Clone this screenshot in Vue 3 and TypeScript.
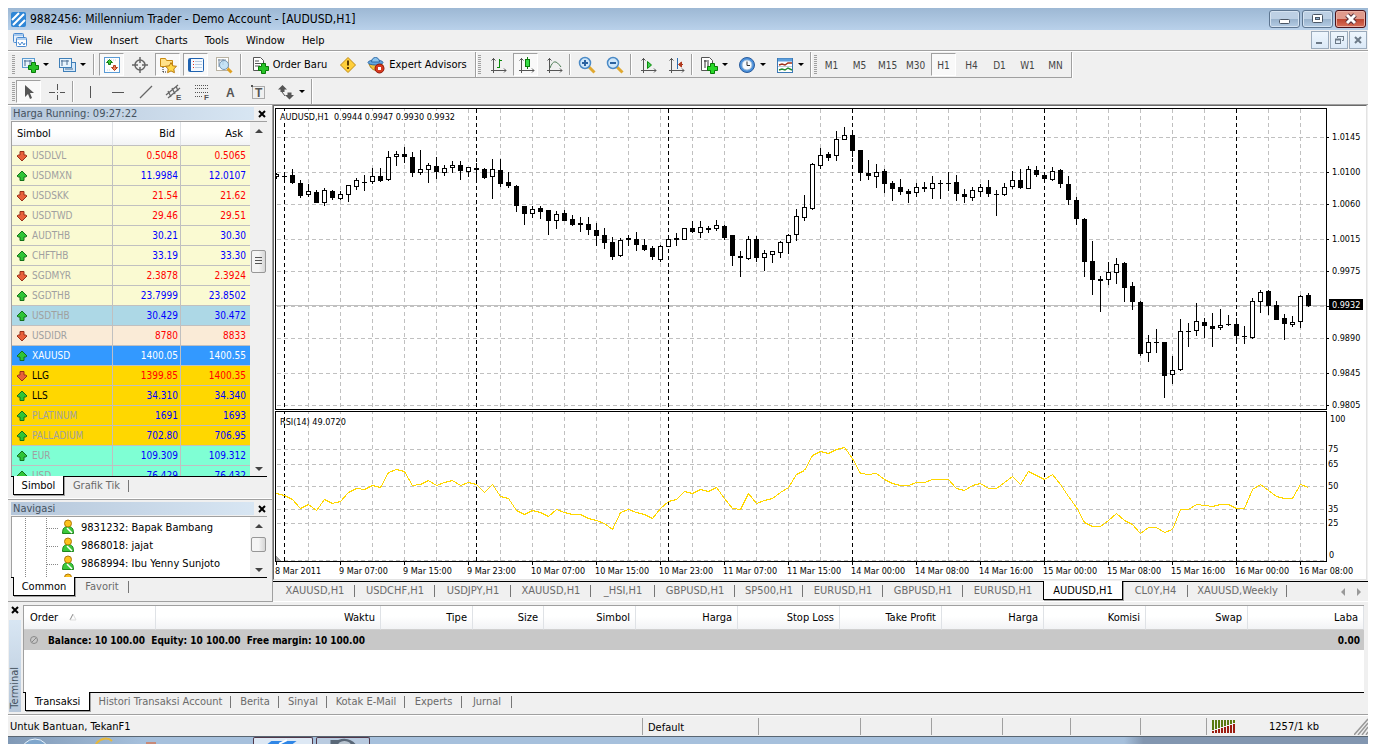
<script setup lang="ts">
interface Quote { sym: string; bid: string; ask: string; up: boolean; tone: string; live?: boolean }
interface Tool { id: string; w: number; label?: string; text?: string; drop?: boolean; on?: boolean; sep?: boolean }
interface Tab { name: string; w: number; on?: boolean }
type Candle = [number, number, number, number, 0 | 1]

const icons: Record<string, string> = {
  newChart: '<rect x="1.500" y="2.500" width="12" height="9" fill="#e8f4fd" stroke="#5b9bd0"/><path d="M4 4v6M3 5h8M9 4v5" stroke="#4a6f94" fill="none"/><path d="M10.500 6.500h4v3h3v4h-3v3h-4v-3h-3v-4h3z" fill="#28c428" stroke="#087a08"/>',
  profiles: '<rect x="5.500" y="6.500" width="12" height="9" fill="#d4e8fa" stroke="#3f7fb8"/><rect x="1.500" y="2.500" width="12" height="9" fill="#e8f4fd" stroke="#3f7fb8"/><path d="M4 4v6M3 5h8M9 4v5M7 13h8" stroke="#4a6f94" fill="none"/>',
  market: '<rect x="1.500" y="1.500" width="15" height="15" fill="#fdfeff" stroke="#5a9bd6"/><path d="M4 4h10M4 14h4" stroke="#c3d4e6" stroke-dasharray="1 1"/><path d="M6.500 3.500l3 3h-2v2h-2v-2h-2z" fill="#3ccb3c" stroke="#117a11"/><path d="M11.500 14.500l-3-3h2v-2h2v2h2z" fill="#f0805a" stroke="#b03c1c"/>',
  target: '<circle cx="9" cy="9" r="5" fill="none" stroke="#666" stroke-width="1.500"/><path d="M9 1v6M9 11v6M1 9h6M11 9h6" stroke="#666" stroke-width="1.500"/>',
  navigator: '<path d="M1.500 2.500h5l1 2h6v6h-12z" fill="#ffe28a" stroke="#c98a10"/><path d="M4 11v5M4 16h4" stroke="#222" stroke-dasharray="1 1" fill="none"/><path d="M12 6.500l1.700 3.300 3.800.5-2.700 2.600.6 3.800-3.400-1.800-3.400 1.800.6-3.800-2.700-2.600 3.800-.5z" fill="#ffd84a" stroke="#b97a10"/>',
  terminal: '<rect x="1.500" y="2.500" width="15" height="13" rx="1" fill="#f4f9ff" stroke="#1f62b0"/><path d="M3 3v12" stroke="#1f62b0" stroke-width="2"/><path d="M6 5.500h1M6 8.500h1M6 11.500h1" stroke="#e03020"/><path d="M8 5.500h7M8 8.500h7M8 11.500h7" stroke="#b8cde2"/>',
  tester: '<rect x="1.500" y="1.500" width="12" height="13" fill="#fff" stroke="#b9b2a2"/><path d="M3 4h8M4 3v8M8 3v6" stroke="#7d8ea0" fill="none"/><circle cx="9" cy="9" r="4.500" fill="#b8dcf4" fill-opacity=".8" stroke="#7796b4"/><path d="M12.500 12.500l4 4" stroke="#e0a020" stroke-width="3"/>',
  order: '<path d="M2.500 1.500h7l3 3v10h-10z" fill="#fff" stroke="#555"/><path d="M4 5h4M4 7.500h6M4 10h5" stroke="#555"/><path d="M10.500 7.500h4v3h3v4h-3v3h-4v-3h-3v-4h3z" fill="#28c428" stroke="#087a08"/>',
  alert: '<path d="M9 1.500l7.500 7.500-7.500 7.500-7.500-7.500z" fill="#ffcf3a" stroke="#c08a10"/><path d="M9 4.500v5M9 11v2" stroke="#5a3a00" stroke-width="2"/>',
  expert: '<path d="M2 8c3 9 13 8 14 1z" fill="#f2c23a" stroke="#a77a12"/><ellipse cx="8.500" cy="6.500" rx="7.500" ry="2.500" fill="#62a4de" stroke="#2f6ba8"/><path d="M4.500 6c0-6 8-6 8 0z" fill="#8cc4ee" stroke="#2f6ba8"/><circle cx="12.500" cy="12.500" r="4.500" fill="#d83a20" stroke="#8e1808"/><rect x="11" y="11" width="3" height="3" fill="#fff"/>',
  bars: '<path d="M4.500 2v15M2 14.500h15M2.500 4.500l2-2 2 2M15 12.500l2 2-2 2" stroke="#555" fill="none"/><path d="M10.500 3v9M8 11.500h2M11 4.500h2" stroke="#0a8a0a" fill="none"/>',
  candles: '<path d="M4.500 2v15M2 14.500h15M2.500 4.500l2-2 2 2M15 12.500l2 2-2 2" stroke="#555" fill="none"/><path d="M10.500 1v12" stroke="#0a7a0a"/><rect x="8.500" y="3.500" width="4" height="7" fill="#35dd45" stroke="#0a7a0a"/>',
  line: '<path d="M4.500 2v15M2 14.500h15M2.500 4.500l2-2 2 2M15 12.500l2 2-2 2" stroke="#555" fill="none"/><path d="M5 12c3-8 6-8 11-1" stroke="#4a7a52" fill="none"/>',
  zoomIn: '<path d="M11 11l5.500 5.500" stroke="#e0a830" stroke-width="3"/><circle cx="7" cy="7" r="5.500" fill="#cfe7fa" stroke="#4b8ac6" stroke-width="1.500"/><path d="M4 7h6M7 4v6" stroke="#2a62a0" stroke-width="2"/>',
  zoomOut: '<path d="M11 11l5.500 5.500" stroke="#e0a830" stroke-width="3"/><circle cx="7" cy="7" r="5.500" fill="#cfe7fa" stroke="#4b8ac6" stroke-width="1.500"/><path d="M4 7h6" stroke="#2a62a0" stroke-width="2"/>',
  scroll: '<path d="M4.500 2v15M2 14.500h15M2.500 4.500l2-2 2 2M15 12.500l2 2-2 2" stroke="#555" fill="none"/><path d="M8.500 5.500v7l4-3.500z" fill="#3ed04e" stroke="#0a8a0a"/>',
  shift: '<path d="M4.500 2v15M2 14.500h15M2.500 4.500l2-2 2 2M15 12.500l2 2-2 2" stroke="#555" fill="none"/><path d="M10.500 2v11" stroke="#2a6cb0"/><path d="M12 8.500h4M14.500 6v5l-3-2.500z" stroke="#b0381c" fill="#b0381c"/>',
  indicators: '<path d="M1.500 1.500h8l3 3v10h-11z" fill="#fff" stroke="#555"/><path d="M5 4v8M4 5h3M8 4v7" stroke="#333" fill="none"/><path d="M10.500 7.500h4v3h3v4h-3v3h-4v-3h-3v-4h3z" fill="#28d828" stroke="#087a08"/>',
  clock: '<circle cx="9" cy="9" r="7.500" fill="#4a90dc" stroke="#2a5c9c"/><circle cx="9" cy="9" r="5" fill="#f6fafe" stroke="#9dbbd8"/><path d="M9 5.500v4h3" stroke="#333" fill="none"/>',
  template: '<rect x="1.500" y="2.500" width="15" height="14" fill="#fff" stroke="#3b78b4"/><path d="M2 4h14" stroke="#5d9fdc" stroke-width="3"/><path d="M3 9l3-1 3 1 3-2h4" stroke="#a03018" fill="none" stroke-width="1.500"/><path d="M3 14l3-1 3 1 3-2 4 2" stroke="#208a30" fill="none" stroke-width="1.500"/><path d="M2 10.500h14" stroke="#bcd"/>',
  cursor: '<path d="M5 2v12l3-3 2 5 2-1-2-5h4z" fill="#555"/>',
  cross: '<path d="M9.500 1v6M9.500 12v5M1 9.500h6M12 9.500h5M9 9.500h1" stroke="#555"/>',
  vline: '<path d="M9.500 3v12" stroke="#555"/>',
  hline: '<path d="M3 9.500h12" stroke="#555"/>',
  trend: '<path d="M3 15L15 3" stroke="#666" stroke-width="1.300"/>',
  channel: '<path d="M1 12L13 2M3 15L15 5M3 8l3 6M7 5l3 6M11 3l2 5" stroke="#666" stroke-width="1.300"/><text x="11" y="17" font-size="8" font-weight="bold" fill="#555" font-family="Liberation Sans, sans-serif">E</text>',
  fibo: '<path d="M2 2.500h13M2 5.500h13M2 9.500h13M2 13.500h8" stroke="#555" stroke-dasharray="1 1"/><text x="11" y="17" font-size="8" font-weight="bold" fill="#555" font-family="Liberation Sans, sans-serif">F</text>',
  text: '<text x="5" y="14" font-size="12" font-weight="bold" fill="#555" font-family="Liberation Sans, sans-serif">A</text>',
  label: '<rect x="3.500" y="3.500" width="12" height="12" fill="none" stroke="#666" stroke-dasharray="1 1"/><path d="M2 2h2v2H2z" fill="#555"/><text x="6" y="14" font-size="12" font-weight="bold" fill="#555" font-family="Liberation Sans, sans-serif">T</text>',
  arrows: '<path d="M5.500 2L10 6.500H7.500V9h-4V6.500H1z" fill="#555"/><path d="M12.500 16.500L17 12h-2.500V9.500h-4V12H8z" fill="#555"/><path d="M5 9l3 4" stroke="#555"/>',
}

const sep: Tool = { id: 'sep', w: 2, sep: true }
const wideSep: Tool = { id: 'sep', w: 4, sep: true }

const groupStandard: Tool[] = [
  { id: 'newChart', w: 34, label: 'New chart', drop: true },
  { id: 'profiles', w: 34, label: 'Profiles', drop: true },
  wideSep,
  { id: 'market', w: 25, label: 'Market watch', on: true },
  { id: 'target', w: 25, label: 'Data window' },
  { id: 'navigator', w: 25, label: 'Navigator', on: true },
  { id: 'terminal', w: 25, label: 'Terminal', on: true },
  { id: 'tester', w: 25, label: 'Strategy tester' },
  wideSep,
  { id: 'order', w: 86, label: 'Order Baru', text: 'Order Baru' },
  { id: 'alert', w: 25, label: 'Alert' },
  { id: 'expert', w: 108, label: 'Expert Advisors', text: 'Expert Advisors' },
]
const groupCharts: Tool[] = [
  { id: 'bars', w: 25, label: 'Bar chart' },
  { id: 'candles', w: 25, label: 'Candlesticks', on: true },
  { id: 'line', w: 25, label: 'Line chart' },
  sep,
  { id: 'zoomIn', w: 25, label: 'Zoom in' },
  { id: 'zoomOut', w: 25, label: 'Zoom out' },
  sep,
  { id: 'scroll', w: 25, label: 'Auto scroll' },
  { id: 'shift', w: 25, label: 'Chart shift' },
  sep,
  { id: 'indicators', w: 35, label: 'Indicators', drop: true },
  { id: 'clock', w: 35, label: 'Periods', drop: true },
  { id: 'template', w: 35, label: 'Templates', drop: true },
]
const groupLines: Tool[] = [
  { id: 'cursor', w: 25, label: 'Cursor', on: true },
  { id: 'cross', w: 25, label: 'Crosshair' },
  sep,
  { id: 'vline', w: 25, label: 'Vertical line' },
  { id: 'hline', w: 25, label: 'Horizontal line' },
  { id: 'trend', w: 25, label: 'Trendline' },
  { id: 'channel', w: 25, label: 'Channel' },
  { id: 'fibo', w: 25, label: 'Fibonacci' },
  { id: 'text', w: 25, label: 'Text' },
  { id: 'label', w: 25, label: 'Text label' },
  { id: 'arrows', w: 35, label: 'Arrows', drop: true },
]
const groups = [groupStandard, groupCharts]
const frames = ['M1', 'M5', 'M15', 'M30', 'H1', 'H4', 'D1', 'W1', 'MN']
const menus = ['File', 'View', 'Insert', 'Charts', 'Tools', 'Window', 'Help']

const quotes: Quote[] = [
  { sym: 'USDLVL', bid: '0.5048', ask: '0.5065', up: false, tone: 'cream' },
  { sym: 'USDMXN', bid: '11.9984', ask: '12.0107', up: true, tone: 'cream' },
  { sym: 'USDSKK', bid: '21.54', ask: '21.62', up: false, tone: 'cream' },
  { sym: 'USDTWD', bid: '29.46', ask: '29.51', up: false, tone: 'cream' },
  { sym: 'AUDTHB', bid: '30.21', ask: '30.30', up: true, tone: 'cream' },
  { sym: 'CHFTHB', bid: '33.19', ask: '33.30', up: true, tone: 'cream' },
  { sym: 'SGDMYR', bid: '2.3878', ask: '2.3924', up: false, tone: 'cream' },
  { sym: 'SGDTHB', bid: '23.7999', ask: '23.8502', up: true, tone: 'cream' },
  { sym: 'USDTHB', bid: '30.429', ask: '30.472', up: true, tone: 'sky' },
  { sym: 'USDIDR', bid: '8780', ask: '8833', up: false, tone: 'peach' },
  { sym: 'XAUUSD', bid: '1400.05', ask: '1400.55', up: true, tone: 'picked' },
  { sym: 'LLG', bid: '1399.85', ask: '1400.35', up: false, tone: 'gold', live: true },
  { sym: 'LLS', bid: '34.310', ask: '34.340', up: true, tone: 'gold', live: true },
  { sym: 'PLATINUM', bid: '1691', ask: '1693', up: true, tone: 'gold' },
  { sym: 'PALLADIUM', bid: '702.80', ask: '706.95', up: true, tone: 'gold' },
  { sym: 'EUR', bid: '109.309', ask: '109.312', up: true, tone: 'aqua' },
  { sym: 'USD', bid: '76.429', ask: '76.432', up: true, tone: 'aqua' },
]
const accounts = ['9831232: Bapak Bambang', '9868018: jajat', '9868994: Ibu Yenny Sunjoto', '9874940: JET']

const chartTabs: Tab[] = [
  { name: 'XAUUSD,H1', w: 80 }, { name: 'USDCHF,H1', w: 80 }, { name: 'USDJPY,H1', w: 76 },
  { name: 'XAUUSD,H1', w: 80 }, { name: '_HSI,H1', w: 64 }, { name: 'GBPUSD,H1', w: 80 },
  { name: 'SP500,H1', w: 68 }, { name: 'EURUSD,H1', w: 80 }, { name: 'GBPUSD,H1', w: 80 },
  { name: 'EURUSD,H1', w: 80 }, { name: 'AUDUSD,H1', w: 80, on: true }, { name: 'CL0Y,H4', w: 65 },
  { name: 'XAUUSD,Weekly', w: 99 },
]
const terminalTabs: Tab[] = [
  { name: 'Transaksi', w: 65, on: true }, { name: 'Histori Transaksi Account', w: 141 },
  { name: 'Berita', w: 48 }, { name: 'Sinyal', w: 48 }, { name: 'Kotak E-Mail', w: 78 },
  { name: 'Experts', w: 57 }, { name: 'Jurnal', w: 50 },
]
const columns = [
  { name: 'Order', w: 132 }, { name: 'Waktu', w: 225 }, { name: 'Tipe', w: 92 }, { name: 'Size', w: 71 },
  { name: 'Simbol', w: 92 }, { name: 'Harga', w: 102 }, { name: 'Stop Loss', w: 102 }, { name: 'Take Profit', w: 102 },
  { name: 'Harga', w: 102 }, { name: 'Komisi', w: 102 }, { name: 'Swap', w: 102 },
]
const statusCells = [116, 102, 71, 71, 68, 70, 66]

// high, body top, body bottom, low, filled
const candles: Candle[] = [
  [173, 174, 176, 178, 0], [172, 176, 176, 180, 1], [169, 175, 182, 183, 1], [180, 183, 195, 197, 1],
  [184, 191, 194, 196, 0], [190, 192, 202, 202, 1], [188, 190, 202, 205, 0], [190, 191, 197, 199, 1],
  [191, 194, 198, 199, 0], [185, 185, 194, 201, 0], [178, 180, 186, 189, 0], [175, 182, 182, 190, 1],
  [168, 176, 181, 183, 0], [168, 176, 180, 181, 1], [151, 157, 179, 180, 0], [151, 154, 156, 165, 0],
  [147, 154, 156, 162, 1], [152, 157, 172, 176, 1], [150, 169, 172, 174, 0], [163, 165, 169, 182, 0],
  [157, 166, 171, 178, 1], [165, 168, 172, 175, 0], [161, 165, 167, 172, 0], [161, 165, 170, 179, 1],
  [167, 167, 171, 176, 0], [163, 168, 169, 178, 1], [168, 169, 177, 178, 1], [159, 169, 176, 198, 0],
  [159, 170, 183, 186, 1], [172, 182, 185, 187, 1], [185, 186, 205, 211, 1], [206, 206, 213, 224, 1],
  [206, 209, 213, 217, 0], [206, 208, 211, 218, 1], [210, 210, 220, 234, 1], [211, 214, 220, 228, 0],
  [210, 213, 220, 220, 1], [215, 219, 224, 225, 1], [217, 223, 224, 231, 1], [217, 224, 229, 234, 1],
  [223, 230, 235, 245, 1], [228, 235, 242, 248, 1], [237, 242, 256, 259, 1], [238, 240, 255, 256, 0],
  [235, 238, 239, 245, 1], [232, 239, 244, 250, 1], [239, 245, 249, 250, 1], [246, 248, 256, 259, 1],
  [245, 246, 259, 261, 0], [239, 239, 246, 246, 0], [233, 238, 239, 245, 1], [228, 228, 239, 239, 0],
  [221, 228, 231, 232, 1], [221, 227, 232, 237, 0], [226, 228, 229, 232, 1], [220, 225, 228, 230, 0],
  [225, 226, 237, 239, 1], [235, 235, 255, 265, 1], [251, 256, 257, 276, 1], [236, 239, 258, 259, 0],
  [236, 239, 257, 261, 1], [250, 253, 257, 270, 0], [251, 251, 254, 262, 0], [241, 242, 252, 257, 0],
  [234, 235, 242, 253, 0], [209, 216, 234, 240, 0], [195, 207, 217, 220, 0], [163, 164, 208, 209, 0],
  [148, 155, 165, 168, 0], [152, 154, 157, 160, 1], [131, 139, 155, 160, 0], [127, 135, 139, 139, 0],
  [132, 135, 150, 156, 1], [150, 150, 172, 180, 1], [160, 173, 175, 179, 1], [164, 172, 176, 187, 0],
  [169, 171, 183, 192, 1], [181, 183, 188, 200, 1], [179, 187, 191, 194, 1], [189, 191, 193, 202, 1],
  [183, 187, 192, 196, 0], [182, 187, 188, 191, 1], [176, 183, 188, 198, 0], [180, 183, 183, 198, 1],
  [172, 183, 183, 190, 1], [175, 182, 193, 200, 1], [189, 194, 196, 202, 1], [187, 190, 197, 200, 0],
  [184, 187, 191, 196, 0], [180, 187, 193, 196, 1], [190, 194, 194, 215, 1], [183, 187, 194, 195, 0],
  [171, 180, 186, 188, 0], [169, 180, 187, 188, 1], [166, 169, 188, 188, 0], [166, 170, 174, 176, 1],
  [174, 175, 178, 182, 1], [167, 171, 179, 180, 0], [169, 170, 183, 187, 1], [176, 184, 199, 204, 1],
  [197, 200, 218, 224, 1], [218, 219, 261, 276, 1], [241, 261, 279, 294, 1], [276, 279, 280, 311, 1],
  [262, 272, 279, 284, 0], [258, 264, 272, 283, 0], [262, 263, 287, 301, 1], [282, 286, 301, 309, 1],
  [301, 302, 353, 355, 1], [335, 342, 352, 361, 0], [329, 342, 342, 352, 1], [342, 342, 375, 397, 1],
  [356, 370, 374, 383, 0], [319, 331, 369, 370, 0], [323, 331, 331, 346, 1], [303, 321, 330, 335, 0],
  [318, 322, 325, 337, 1], [313, 326, 328, 346, 1], [309, 325, 327, 329, 0], [315, 324, 324, 325, 1],
  [318, 324, 335, 343, 1], [326, 336, 336, 343, 1], [298, 301, 337, 338, 0], [290, 292, 301, 312, 0],
  [290, 291, 305, 314, 1], [301, 305, 319, 319, 1], [314, 318, 323, 339, 1], [316, 322, 324, 326, 0],
  [295, 296, 321, 327, 0], [293, 295, 305, 306, 1],
]
const rsi = [
  493, 495, 499, 508, 504, 510, 499, 503, 501, 492, 488, 489, 485, 487, 472, 469, 471, 485, 484, 480, 485, 482, 480, 485,
  482, 484, 492, 484, 496, 498, 510, 514, 510, 512, 516, 509, 512, 514, 514, 518, 520, 523, 529, 512, 509, 512, 514, 518,
  508, 501, 499, 491, 493, 489, 491, 487, 498, 508, 509, 493, 503, 500, 498, 492, 487, 474, 470, 455, 451, 453, 449, 447,
  458, 473, 474, 473, 479, 483, 485, 485, 482, 482, 479, 479, 479, 488, 490, 485, 483, 488, 488, 482, 476, 484, 471, 475,
  479, 474, 484, 496, 507, 522, 526, 526, 520, 513, 520, 524, 533, 527, 527, 532, 529, 509, 509, 504, 505, 506, 504, 504,
  508, 508, 489, 484, 490, 496, 498, 498, 484, 487,
]
const barX = (i: number) => 276 + i * 8
const rsiPoints = rsi.map((y, i) => `${barX(i)},${y}`).join(' ')
const dayLines = [284, 476, 668, 852, 1044, 1236]
const gridX = Array.from({ length: 32 }, (_, i) => 308 + i * 32).filter(x => !dayLines.includes(x))
const prices = [
  { y: 137, t: '1.0145' }, { y: 172, t: '1.0100' }, { y: 204, t: '1.0060' }, { y: 239, t: '1.0015' },
  { y: 271, t: '0.9975' }, { y: 306, t: '' }, { y: 338, t: '0.9890' }, { y: 373, t: '0.9845' }, { y: 405, t: '0.9805' },
]
const levels = [{ y: 449, t: '75' }, { y: 464, t: '65' }, { y: 486, t: '50' }, { y: 509, t: '35' }, { y: 523, t: '25' }]
const times = [
  '8 Mar 2011', '9 Mar 07:00', '9 Mar 15:00', '9 Mar 23:00', '10 Mar 07:00', '10 Mar 15:00', '10 Mar 23:00',
  '11 Mar 07:00', '11 Mar 15:00', '14 Mar 00:00', '14 Mar 08:00', '14 Mar 16:00', '15 Mar 00:00', '15 Mar 08:00',
  '15 Mar 16:00', '16 Mar 00:00', '16 Mar 08:00',
]
</script>

<template>
  <div class="app">
    <header class="title">
      <svg class="logo" viewBox="0 0 15 15"><rect width="15" height="15" rx="2" fill="#2f86d6" /><path d="M1 8L8 1M2 13L13 2M8 14l6-6" stroke="#fff" stroke-width="2" /></svg>
      <span>9882456: Millennium Trader - Demo Account - [AUDUSD,H1]</span>
      <div class="winbtns">
        <button aria-label="Minimize"><svg viewBox="0 0 29 16"><rect x="9.500" y="8.500" width="10" height="4" rx="1" fill="#fff" stroke="#4a5665" /></svg></button>
        <button aria-label="Maximize"><svg viewBox="0 0 29 16"><rect x="9.500" y="3.500" width="10" height="8" rx="1" fill="#fff" stroke="#4a5665" /><rect x="12.500" y="6.500" width="4" height="2" fill="#8fb0d0" stroke="#4a5665" /></svg></button>
        <button class="close" aria-label="Close"><svg viewBox="0 0 29 16"><path d="M11 4l8 8M19 4l-8 8" stroke="#54303a" stroke-width="5" /><path d="M11 4l8 8M19 4l-8 8" stroke="#fff" stroke-width="3" /></svg></button>
      </div>
    </header>

    <nav class="menu">
      <svg class="mdi" viewBox="0 0 16 16"><rect x="1.500" y="1.500" width="10" height="9" rx="1" fill="#e6f0fb" stroke="#4a8ad0" /><rect x="4.500" y="5.500" width="10" height="9" rx="1" fill="#fff" stroke="#4a8ad0" /><path d="M2 3h9M5 7h9" stroke="#6aa4e0" /><path d="M6 10l2 3 2-3 2 3 1-2" stroke="#4a8ad0" fill="none" /></svg>
      <button v-for="m in menus" :key="m">{{ m }}</button>
      <div class="mdibtns">
        <button aria-label="Minimize chart"><svg viewBox="0 0 16 16"><path d="M4 11h6" stroke="#6c7a88" stroke-width="2" /></svg></button>
        <button aria-label="Restore chart"><svg viewBox="0 0 16 16"><path d="M6.500 6V4.500h6v4H11M6 4.500h7" stroke="#6c7a88" fill="none" /><rect x="4.500" y="7.500" width="5" height="4" fill="none" stroke="#6c7a88" /><path d="M4 7.500h6" stroke="#6c7a88" stroke-width="2" /></svg></button>
        <button aria-label="Close chart"><svg viewBox="0 0 16 16"><path d="M5 5l6 6M11 5l-6 6" stroke="#6c7a88" stroke-width="2" /></svg></button>
      </div>
    </nav>

    <div class="toolrow">
      <div v-for="(g, gi) in groups" :key="gi" class="group" :class="'g' + gi">
        <i class="grip" />
        <template v-for="(t, i) in g" :key="i">
          <i v-if="t.sep" class="sep" :class="{ wide: t.w === 4 }" />
          <button v-else class="tool" :class="{ on: t.on, drop: t.drop, texty: t.text }" :style="{ width: t.w + 'px' }" :aria-label="t.label">
            <svg class="ic" viewBox="0 0 18 18" v-html="icons[t.id]" />
            <span v-if="t.text">{{ t.text }}</span>
            <i v-if="t.drop" class="caret" />
          </button>
        </template>
      </div>
      <div class="group g2">
        <i class="grip" />
        <button v-for="f in frames" :key="f" class="tool frame" :class="{ on: f === 'H1' }">{{ f }}</button>
      </div>
    </div>

    <div class="toolrow second">
      <div class="group g3">
        <i class="grip" />
        <template v-for="(t, i) in groupLines" :key="i">
          <i v-if="t.sep" class="sep" />
          <button v-else class="tool" :class="{ on: t.on, drop: t.drop }" :style="{ width: t.w + 'px' }" :aria-label="t.label">
            <svg class="ic" viewBox="0 0 18 18" v-html="icons[t.id]" />
            <i v-if="t.drop" class="caret" />
          </button>
        </template>
      </div>
    </div>

    <main class="main">
      <aside class="side">
        <section class="panel watch">
          <div class="phead"><h2>Harga Running: 09:27:22</h2><button class="x" aria-label="Close price window"><svg viewBox="0 0 8 8"><path d="M1 1l6 6M7 1l-6 6" stroke="#000" stroke-width="2" /></svg></button></div>
          <div class="list">
            <div class="clip">
              <table class="quotes">
                <colgroup><col class="c1"><col class="c2"><col></colgroup>
                <thead><tr><th>Simbol</th><th>Bid</th><th>Ask</th></tr></thead>
                <tbody>
                  <tr v-for="q in quotes" :key="q.sym" :class="[q.tone, q.up ? 'up' : 'down', { live: q.live }]">
                    <td>
                      <svg class="dir" viewBox="0 0 12 12">
                        <path v-if="q.up" d="M6 1l5 5-1.500 1H8v3.500H4V7H2.500L1 6z" fill="#2fc436" stroke="#14701a" />
                        <path v-else d="M6 11L1 6l1.500-1H4V1.500h4V5h1.500L11 6z" fill="#e8603a" stroke="#98301a" />
                      </svg>{{ q.sym }}
                    </td>
                    <td>{{ q.bid }}</td>
                    <td>{{ q.ask }}</td>
                  </tr>
                </tbody>
              </table>
            </div>
            <div class="scroll"><i class="tri upw" /><i class="thumb"><svg viewBox="0 0 13 20"><path d="M3 6.500h7M3 9.500h7M3 12.500h7" stroke="#555" /></svg></i><i class="tri downw" /></div>
          </div>
          <div class="tabs"><button class="tab on w50">Simbol</button><button class="tab w65">Grafik Tik</button></div>
        </section>
        <section class="panel nav">
          <div class="phead"><h2>Navigasi</h2><button class="x" aria-label="Close navigator"><svg viewBox="0 0 8 8"><path d="M1 1l6 6M7 1l-6 6" stroke="#000" stroke-width="2" /></svg></button></div>
          <div class="list">
            <ul class="clip tree">
              <li v-for="a in accounts" :key="a">
                <svg class="branch" viewBox="0 0 46 18"><path d="M13.500 0v18M34.500 0v18M35 10.500h11" stroke="#888" stroke-dasharray="1 1" fill="none" /></svg>
                <svg class="man" viewBox="0 0 14 16"><path d="M1.500 14.500c0-5 1.500-7 5.500-7s5.500 2 5.500 7z" fill="#3cc83c" stroke="#1c861c" /><path d="M6 9l5 5" stroke="#fff" stroke-width="1.500" /><circle cx="7" cy="4.500" r="3.500" fill="#fcc21c" stroke="#b07808" /></svg>
                <span>{{ a }}</span>
              </li>
            </ul>
            <div class="scroll"><i class="tri upw" /><i class="thumb" /><i class="tri downw" /></div>
          </div>
          <div class="tabs"><button class="tab on w61">Common</button><button class="tab w54">Favorit</button></div>
        </section>
      </aside>

      <section class="work">
        <div class="frame-box">
          <svg class="chart" viewBox="274 106 1092 473" preserveAspectRatio="xMinYMin meet" shape-rendering="crispEdges">
            <g stroke="#c0c0c0" fill="none">
              <path v-for="x in gridX" :key="x" :d="`M${x + 0.5} 109V561`" stroke-dasharray="4 3" />
              <path v-for="p in prices" :key="p.y" :d="`M277 ${p.y + 0.5}H1326`" stroke-dasharray="4 3" />
              <path v-for="l in levels" :key="l.y" :d="`M277 ${l.y + 0.5}H1326`" stroke-dasharray="4 3" />
              <path d="M277 560.500H1326" stroke-dasharray="4 3" />
              <path d="M276 305.500H1326" />
            </g>
            <path v-for="x in dayLines" :key="x" :d="`M${x + 0.5} 109V561`" stroke="#000" stroke-dasharray="4 3" />
            <polyline :points="rsiPoints" fill="none" stroke="#ffd700" stroke-width="1" transform="translate(0.5 0.5)" />
            <g v-for="(c, i) in candles" :key="i">
              <rect :x="barX(i)" :y="c[0]" width="1" :height="c[3] - c[0] + 1" />
              <rect :x="barX(i) - 2" :y="c[1]" width="5" :height="c[2] - c[1] + 1" />
              <rect v-if="!c[4]" :x="barX(i) - 1" :y="c[1] + 1" width="3" :height="c[2] - c[1] - 1" fill="#fff" />
            </g>
            <rect x="274" y="106" width="1" height="473" fill="#fff" />
            <rect x="276" y="410" width="1050" height="1" fill="#fff" />
            <rect x="278" y="111" width="186" height="11" fill="#fff" />
            <path d="M275.500 108.500H1326.500V409.500H275.500zM275.500 411.500H1326.500V561.500H275.500z" fill="none" stroke="#000" />
            <path v-for="p in prices" :key="'t' + p.y" :d="`M1327 ${p.y + 0.5}h2`" stroke="#000" />
            <path v-for="(t, i) in times" :key="'x' + t" :d="`M${276.5 + i * 64} 562v3`" stroke="#000" />
            <path d="M276 556v5h5z" fill="#a0a0a0" />
            <rect x="1329" y="299" width="34" height="11" />
            <g class="ctext">
              <text x="280" y="120">AUDUSD,H1&#160; 0.9944 0.9947 0.9930 0.9932</text>
              <text x="280" y="425">RSI(14) 49.0720</text>
              <text v-for="p in prices" :key="'p' + p.y" x="1332" :y="p.y + 3">{{ p.t }}</text>
              <text x="1332" y="308" fill="#fff">0.9932</text>
              <text x="1330" y="422">100</text>
              <text v-for="l in levels" :key="'l' + l.y" x="1328" :y="l.y + 3">{{ l.t }}</text>
              <text x="1329" y="558">0</text>
              <text v-for="(t, i) in times" :key="t" :x="275 + i * 64" y="574">{{ t }}</text>
            </g>
          </svg>
        </div>
        <div class="tabs charttabs">
          <button v-for="(t, i) in chartTabs" :key="i" class="tab" :class="{ on: t.on, nobar: i === 9 }" :style="{ width: t.w + 'px' }">{{ t.name }}</button>
          <div class="arrows"><i /><i class="r" /></div>
        </div>
      </section>
    </main>

    <section class="terminal">
      <div class="strip">
        <button class="x" aria-label="Close terminal"><svg viewBox="0 0 8 8"><path d="M1 1l6 6M7 1l-6 6" stroke="#000" stroke-width="2" /></svg></button>
        <div class="vert"><span>Terminal</span></div>
      </div>
      <div class="tbody">
        <div class="sheet">
          <table class="orders">
            <colgroup><col v-for="(c, i) in columns" :key="i" :style="{ width: c.w + 'px' }"><col></colgroup>
            <thead>
              <tr>
                <th v-for="(c, i) in columns" :key="i">{{ c.name }}<svg v-if="i === 0" class="sort" viewBox="0 0 8 8"><path d="M1 7L4 1" stroke="#888" /><path d="M4 1l3 6H1" stroke="#ddd" fill="none" /></svg></th>
                <th>Laba</th>
              </tr>
            </thead>
            <tbody>
              <tr><td colspan="11"><svg class="dot" viewBox="0 0 8 8"><circle cx="4" cy="4" r="3.500" fill="#c8c8c8" stroke="#888" /><path d="M2 6l4-4" stroke="#888" /></svg>Balance: 10 100.00&#160; Equity: 10 100.00&#160; Free margin: 10 100.00</td><td>0.00</td></tr>
            </tbody>
          </table>
        </div>
        <div class="tabs">
          <button v-for="t in terminalTabs" :key="t.name" class="tab" :class="{ on: t.on }" :style="{ width: t.w + 'px' }">{{ t.name }}</button>
        </div>
      </div>
    </section>

    <footer class="status">
      <span class="hint">Untuk Bantuan, TekanF1</span>
      <span v-for="(w, i) in statusCells" :key="i" class="cell" :style="{ width: w + 'px' }">{{ i === 0 ? 'Default' : '' }}</span>
      <span class="cell net">
        <svg class="meter" viewBox="0 0 24 13"><g v-for="n in 8" :key="n"><rect :x="n * 3 - 3" y="0" width="2" :height="11 - n" fill="#5a7a10" /><rect :x="n * 3 - 3" :y="12 - n" width="2" :height="n + 1" fill="#9c1c10" /></g></svg>
        <span>1257/1 kb</span>
      </span>
      <svg class="size" viewBox="0 0 14 18"><path d="M0 18L14 2M4 18l10-12M8 18l6-8M12 18l2-3" stroke="#999" stroke-width="1.500" /></svg>
    </footer>
    <div class="taskbar">
      <svg class="start" viewBox="0 0 160 7"><circle cx="27" cy="16" r="14" fill="#7fa6cc" stroke="#e8f2fb" /><path d="M88 7c4-6 12-7 16-3" stroke="#e8b83a" stroke-width="2" fill="none" /><path d="M138 5h10v2h-10z" fill="#c88a78" /></svg>
      <i class="task"><svg viewBox="0 0 60 6"><path d="M14 6l4-3h26l-4 3z" fill="#2f86e6" /><path d="M26 6l8-4" stroke="#fff" stroke-width="2" /></svg></i>
      <i class="task"><svg viewBox="0 0 54 6"><path d="M14 6V2h8c8-3 14 0 18 4z" fill="#5a6878" /><path d="M22 6c3-4 10-4 13 0z" fill="#b8c4d0" /></svg></i>
      <i class="tray" />
    </div>
  </div>
</template>

<style>
body { margin: 0; background: #fff; }
</style>

<style scoped>
.app { box-sizing: border-box; height: 100vh; padding: 8px 8px 0; display: flex; flex-direction: column; overflow: hidden; background: #fff; color: #000; font: 11px/13px "DejaVu Sans Condensed", "Noto Sans", sans-serif; }
.app *, .app *::before { box-sizing: border-box; }
button { font: inherit; color: inherit; margin: 0; padding: 0; border: 0; background: none; }
svg { display: block; flex: none; }
i { display: block; flex: none; }

.title { flex: none; height: 22px; display: flex; align-items: center; gap: 4px; padding: 0 2px 0 3px; font-size: 12px; background: linear-gradient(#9db8d4, #b9d1ea); }
.title > span { flex: 1; }
.logo { width: 15px; height: 15px; }
.winbtns { display: flex; gap: 2px; }
.winbtns button { width: 31px; height: 18px; border: 1px solid #5d7590; border-radius: 3px; box-shadow: inset 0 0 0 1px #d5e3f1; background: linear-gradient(#bdd0e4 50%, #98b2cc 50%, #b4cce4); }
.winbtns svg { width: 29px; height: 16px; }
.winbtns .close { border-color: #4a1018; box-shadow: inset 0 0 0 1px #eab0a4; background: linear-gradient(#e09a8c 50%, #bc4430 50%, #d8705a); }

.menu { flex: none; height: 21px; display: flex; align-items: center; border-bottom: 1px solid #a0a0a0; background: #f0f0f0; padding-left: 4px; }
.mdi { width: 16px; height: 16px; margin-right: 8px; }
.menu > button { padding: 0 17px 0 0; }
.mdibtns { margin-left: auto; display: flex; gap: 1px; padding-right: 1px; }
.mdibtns button { width: 18px; height: 18px; border: 1px solid #9aaabb; background: linear-gradient(#eef6fd, #dbe9f7); }
.mdibtns svg { width: 16px; height: 16px; }

.toolrow { flex: none; height: 27px; display: flex; background: #f0f0f0; border-top: 1px solid #fff; }
.toolrow.second { border-top-color: #f0f0f0; border-bottom: 1px solid #a0a0a0; }
.group { display: flex; align-items: center; gap: 3px; border-right: 1px solid #a0a0a0; border-bottom: 1px solid #a0a0a0; box-shadow: 1px 1px 0 #fff; padding: 0 4px; }
.second .group { border-bottom: 0; box-shadow: 1px 0 0 #fff; padding: 0 3px 0 4px; }
.grip { width: 3px; height: 20px; background: repeating-linear-gradient(#a0a0a0 0 1px, #f0f0f0 1px 2px); }
.g1 { padding: 0 3px 0 2px; }
.g1 .grip { margin-right: 1px; }
.g2 { padding: 0 3px; }
.g2 .grip { margin-right: -1px; }
.g3 .grip { margin-right: -2px; }
.sep { width: 2px; height: 21px; border-left: 1px solid #a0a0a0; border-right: 1px solid #fff; }
.sep.wide { margin: 0 1px; }
.tool { flex: none; width: 25px; height: 23px; display: flex; align-items: center; justify-content: center; gap: 4px; border: 1px solid transparent; white-space: nowrap; }
.tool.on { border-color: #a0a0a0 #fff #fff #a0a0a0; background: #f9f9f9; }
.tool.frame { font-size: 10px; color: #444; padding-top: 2px; }
.ic { width: 18px; height: 18px; }
.caret { border: 3px solid transparent; border-top-color: #000; border-bottom: 0; }

.main { flex: 1; min-height: 0; display: flex; background: #f0f0f0; }
.side { flex: none; width: 264px; display: flex; flex-direction: column; }
.panel { display: flex; flex-direction: column; border-bottom: 1px solid #fff; border-top: 1px solid #fff; }
.watch { flex: 1; min-height: 0; padding: 1px 5px 2px 3px; }
.nav { flex: none; height: 103px; border-top-color: #a0a0a0; border-bottom-color: #a0a0a0; padding: 2px 5px 4px 3px; }
.phead { flex: none; height: 13px; display: flex; align-items: center; justify-content: space-between; margin-bottom: 1px; }
.phead h2 { margin: 0; padding-left: 2px; width: 243px; font: inherit; line-height: 13px; color: #45525f; background: linear-gradient(90deg, #b4c6da, #d8e6f3); }
.x { width: 8px; height: 8px; margin-right: 1px; }
.x svg { width: 8px; height: 8px; }
.list { flex: 1; min-height: 0; display: flex; border-top: 1px solid #a0a0a0; border-left: 1px solid #a0a0a0; background: #fff; }
.clip { flex: 1; min-width: 0; overflow: hidden; }
.quotes { width: 100%; table-layout: fixed; border-spacing: 0; font-size: 10px; }
.c1 { width: 101px; }
.c2 { width: 68px; }
.quotes th { height: 24px; padding: 0 5px; font-weight: normal; font-size: 11px; text-align: right; border-right: 1px solid #dfe2e6; border-bottom: 1px solid #c0c0c0; background: linear-gradient(#fff 45%, #f2f3f5); }
.quotes th:first-child { text-align: left; }
.quotes td { height: 20px; padding: 0 2px; text-align: right; border-right: 1px solid #c0c0c0; border-bottom: 1px solid #c0c0c0; }
.quotes td:last-child { padding-right: 4px; border-right: 0; }
.quotes th:last-child { border-right: 0; padding-right: 7px; }
.quotes td:first-child { display: flex; align-items: center; gap: 4px; padding: 0 4px; color: #a0a0a0; }
.dir { width: 12px; height: 12px; }
.up td { color: #00f; }
.down td { color: #f00; }
.cream td { background: #fafad2; }
.sky td { background: #add8e6; }
.peach td { background: #faebd7; }
.gold td { background: #ffd700; }
.aqua td { background: #7fffd4; }
.quotes .live td:first-child { color: #000; }
.quotes .picked td, .quotes .picked td:first-child { background: #3399ff; color: #fff; }
.scroll { flex: none; width: 17px; display: flex; flex-direction: column; align-items: center; background: #f0f0f0; padding: 7px 0 5px; }
.tri { border: 4px solid transparent; }
.upw { border-top: 0; border-bottom-color: #444; }
.downw { border-bottom: 0; border-top-color: #444; margin-top: auto; }
.thumb { width: 15px; height: 23px; border: 1px solid #979797; border-radius: 2px; background: linear-gradient(90deg, #f4f4f4 50%, #d6d6d6); margin-top: 117px; }
.thumb svg { width: 13px; height: 20px; }
.nav .thumb { height: 15px; margin-top: 9px; }
.tree { margin: 0; padding: 1px 0 0; list-style: none; }
.tree li { height: 18px; display: flex; align-items: center; }
.branch { width: 46px; height: 18px; }
.man { width: 14px; height: 16px; margin: 0 6px 0 3px; }

.tabs { flex: none; height: 20px; display: flex; border-top: 1px solid #000; padding-left: 2px; background: #f0f0f0; }
.tab { flex: none; height: 17px; color: #6a6a6a; text-align: center; position: relative; white-space: nowrap; }
.tab::after { content: ""; position: absolute; right: 0; top: 3px; height: 12px; border-right: 1px solid #777; }
.tab.on { height: 19px; margin-top: -1px; background: #fff; color: #000; border: 1px solid #000; border-top: 0; box-shadow: 1px 1px 0 #a0a0a0; }
.tab.on::after, .tab.nobar::after { content: none; }
.w50 { width: 51px; }
.w65 { width: 65px; }
.w61 { width: 62px; }
.w54 { width: 54px; }

.work { flex: 1; min-width: 0; display: flex; flex-direction: column; border-left: 1px solid #a0a0a0; }
.frame-box { flex: 1; min-height: 0; margin-right: 1px; background: #fff; border: 1px solid #696969; border-right-color: #e3e3e3; border-bottom-color: #e3e3e3; }
.chart { width: 100%; height: 100%; }
.ctext { font-size: 9px; }
.charttabs { margin-top: 1px; height: 21px; border-bottom: 1px solid #fff; }
.arrows { margin-left: auto; display: flex; gap: 12px; align-items: center; padding-right: 7px; }
.arrows i { border: 4px solid transparent; border-left: 0; border-right-color: #999; }
.arrows i.r { border: 4px solid transparent; border-right: 0; border-left-color: #999; }

.terminal { flex: none; height: 113px; display: flex; padding-top: 3px; background: #f0f0f0; border-bottom: 1px solid #a0a0a0; }
.strip { flex: none; width: 15px; display: flex; flex-direction: column; align-items: center; padding: 1px 1px 2px 0; gap: 6px; }
.strip .x { margin: 0; }
.vert { flex: 1; width: 12px; display: flex; align-items: flex-end; background: linear-gradient(#d8e6f3, #b8c8da); }
.vert span { writing-mode: vertical-rl; transform: rotate(180deg); line-height: 12px; padding-top: 3px; color: #45525f; }
.tbody { flex: 1; min-width: 0; display: flex; flex-direction: column; padding-right: 4px; }
.sheet { flex: 1; border-top: 1px solid #a0a0a0; border-left: 1px solid #a0a0a0; background: #fff; }
.orders { width: 100%; table-layout: fixed; border-spacing: 0; }
.orders th { height: 24px; padding: 0 5px; font-weight: normal; text-align: right; border-right: 1px solid #dfe2e6; border-bottom: 1px solid #d0d0d0; background: linear-gradient(#fff 45%, #f2f3f5); }
.orders th:first-child { text-align: left; padding-left: 6px; }
.sort { display: inline-block; width: 8px; height: 8px; margin-left: 11px; }
.orders td { height: 20px; padding: 0 4px 0 6px; font-weight: bold; font-size: 10px; background: #c8c8c8; }
.orders td:last-child { text-align: right; }
.dot { display: inline-block; width: 8px; height: 8px; margin-right: 10px; }
.terminal .tabs { height: 22px; }

.status { flex: none; height: 22px; display: flex; align-items: center; background: #f0f0f0; border-top: 1px solid #fff; border-bottom: 1px solid #5a6672; }
.hint { flex: 1; padding: 1px 0 0 2px; }
.cell { flex: none; height: 17px; border-left: 1px solid #a0a0a0; padding-left: 5px; line-height: 19px; }
.net { width: 148px; display: flex; align-items: center; gap: 33px; }
.meter { width: 24px; height: 13px; }
.size { width: 14px; height: 18px; }
.taskbar { flex: none; height: 7px; display: flex; background: linear-gradient(90deg, #8099b6, #a6c0dc 10%, #a6c0dc 80%, #a6c0dc); }
.start { width: 160px; height: 7px; margin-right: 85px; }
.task { width: 60px; border: 1px solid #51384a; border-bottom: 0; border-radius: 2px 2px 0 0; background: #dde8f4; margin-right: 3px; overflow: hidden; }
.task svg { width: 100%; height: 6px; }
.task + .task { width: 54px; background: #b9cbe0; }
.tray { margin-left: auto; width: 244px; background: linear-gradient(90deg, #a6c0dc, #8296b0 8%); }
</style>
